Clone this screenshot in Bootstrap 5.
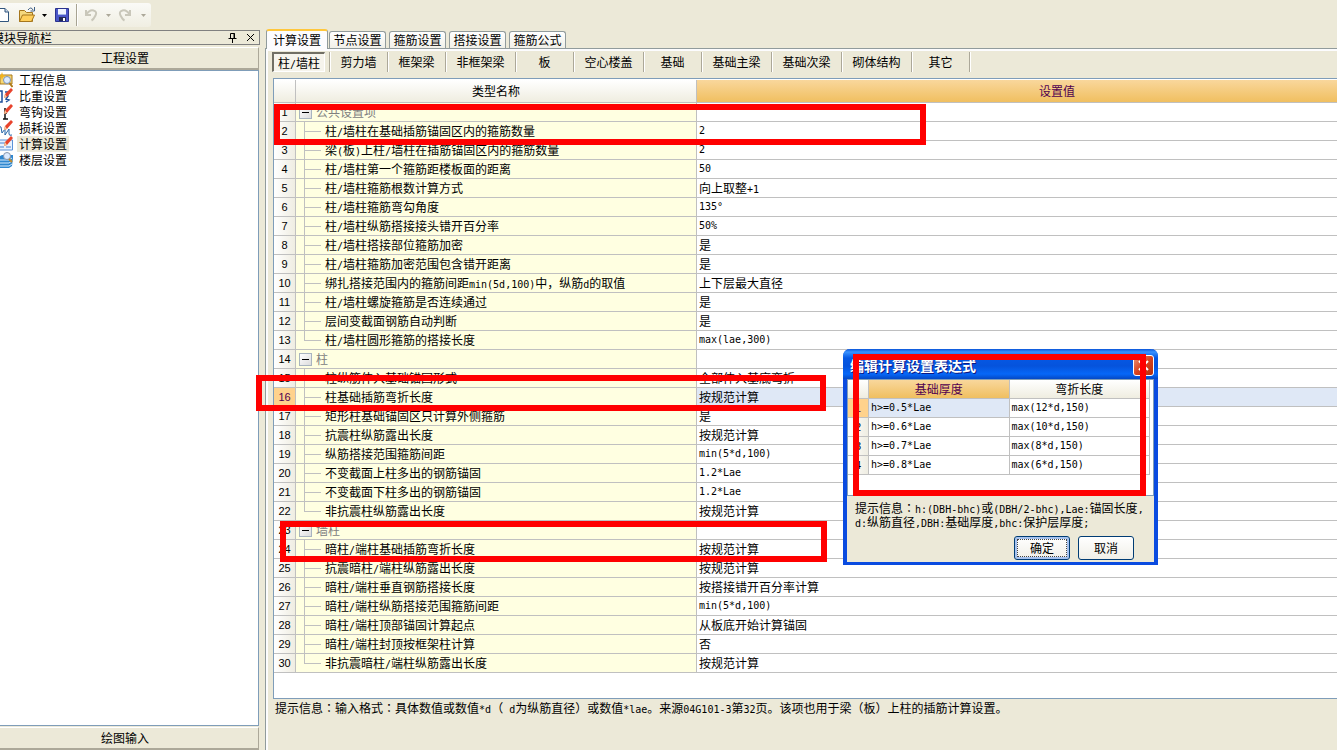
<!DOCTYPE html>
<html lang="zh-CN">
<head>
<meta charset="utf-8">
<meta name="viewport" content="width=device-width, initial-scale=1">
<title>工程设置 - 计算设置</title>
<link href="https://cdn.jsdelivr.net/npm/bootstrap@5.3.0/dist/css/bootstrap.min.css" rel="stylesheet">
<style>
:root{--face:#ece9d8;--line:#c0c0c0;--edge:#7f9db9}
body{font-family:"Noto Sans CJK SC",sans-serif;font-size:12px;line-height:16px;color:#000;background:var(--face)}
button{font:inherit;color:inherit;padding:0;border:0;background:none;white-space:nowrap}
/* half-width Latin text */
.en{font-family:"DejaVu Sans Mono",monospace;font-size:10px}
span.en{line-height:1}
/* colon centred in its square */
.mid{font-family:"Noto Sans CJK TC",sans-serif;line-height:1}
/* toolbar */
.tool-row{height:30px;padding-top:3px}
.tool-strip{height:24px;width:151px;background:linear-gradient(#fafaf7,#f0eee2);border-radius:0 3px 3px 0}
.tool-strip svg{display:block}
.tool-strip button{height:24px}
.tool-sep{width:2px;height:22px;background:#a7a392;border-right:1px solid #fff}
/* navigation panel */
.nav-pane{width:260px;flex:none}
.pane-title{height:15px;border:1px solid #808080;border-left:0;line-height:13px;margin-bottom:2px}
.pane-title b{font-weight:400;margin-left:-8px}
.pane-btn{height:23px;border-top:1px solid #fff;border-right:1px solid #aca899;border-bottom:2px solid #aca899;text-align:center;margin-right:1px;padding-right:8px}
.pane-list{border:1px solid var(--edge);border-left:0;margin:0 1px 1px 0;background:#fff;padding-top:1px}
.pane-list a{display:flex;height:16px;color:#000;text-decoration:none}
.pane-list svg{flex:none;margin-left:-3px;margin-right:4px}
.pane-list span{padding:0 2px}
.pane-list a.current span{background:var(--face)}
/* work area */
.work{margin-left:5px;min-width:0}
.tab-row{height:19px;margin-top:-1px;padding-left:1px;gap:3px;align-items:flex-end}
.tab-row button{width:57px;height:17px;background:linear-gradient(#fff,#f1f0e8);border:1px solid #919b9c;border-bottom:0;border-radius:3px 3px 0 0;line-height:16px}
.tab-row button.active{width:62px;height:20px;margin:0 -2px -1px 0;background:#fcfcfe;border-top:2px solid #ffc73c;position:relative;z-index:1}
.tab-body{border:1px solid #919b9c;border-right:0;border-bottom:0;box-shadow:inset 2px 2px #fcfcfe;padding:3px 0 0 6px}
.sub-row{height:26px}
.sub-row button{height:20px;border-left:1px solid #aca899;box-shadow:inset 1px 0 #fff;line-height:20px}
.sub-row .w3{width:58px}.sub-row .w4{width:70px}
.sub-row .pressed{width:53px;margin-right:4px;border:1px solid #fff;border-top:2px solid #716f64;border-left:2px solid #716f64;background:#f6f4ec;box-shadow:none;line-height:16px}
.sub-row i{width:2px;height:20px;background:#aca899;border-right:1px solid #fff}
.grid-box{border:1px solid var(--edge);border-right:0;background:#fff;padding-top:1px;margin-left:1px}
.sheet{width:100%;table-layout:fixed;border-collapse:separate;border-spacing:0}
.sheet th,.sheet td{height:19px;padding:0 0 0 2px;line-height:18px;border-right:1px solid var(--line);border-bottom:1px solid var(--line);font-weight:400;white-space:nowrap;overflow:hidden}
.sheet th{padding:0;text-align:center;background:linear-gradient(#fff,#efede0)}
.sheet tbody th{background:linear-gradient(90deg,#fff,#efede2);font-family:"Liberation Sans",sans-serif;font-size:11px}
.sheet thead th.hot{color:#500050;background:linear-gradient(#f9d79c,#f0bf60)}
.sheet tbody th.hot{color:#500050;background:#ffd28c}
.sheet td.hot{background:#dfe8f6}
.main-sheet thead th{height:23px;line-height:22px}
.main-sheet thead th.hot{padding-left:80px}
.main-sheet th:last-child,.main-sheet td:last-child{border-right:0}
.main-sheet tbody td:nth-child(2){background:#ffffe1}
.main-sheet tbody td.leaf{padding-left:29px;background:linear-gradient(var(--line),var(--line)) 8px 0/1px 100% no-repeat,linear-gradient(var(--line),var(--line)) 8px 9px/17px 1px no-repeat #ffffe1}
.main-sheet tbody td.tail{background-size:1px 10px,17px 1px}
.main-sheet td.group{padding-left:3px;color:#808080}
.group button{width:13px;height:13px;border:1px solid #a8b4c0;background:linear-gradient(135deg,#fff,#dcdcdc);vertical-align:middle;margin:-2px 4px 0 0;display:inline-flex;align-items:center;justify-content:center}
.group button::before{content:"";width:7px;height:1px;background:#000}
.hint{padding:1px 0 0 3px;height:51px;white-space:nowrap}
/* expression dialog */
.dlg{position:absolute;left:843px;top:349px;width:315px;background:var(--face);border:solid #0a4be0;border-width:0 4px 3px;border-radius:7px 7px 0 0}
.dlg-title{height:30px;margin:0 -4px;padding:2px 4px 0 7px;border-radius:7px 7px 0 0;background:linear-gradient(#0a54d8,#3a93ff 3px,#0558e4 9px,#0553dc 17px,#0667f8 25px,#0448c4);color:#fff;font-size:14px;font-weight:700;text-shadow:1px 1px #0a1883}
.dlg-title button{width:21px;height:21px;border:1px solid #fff;border-radius:3px;background:linear-gradient(135deg,#e9967a,#d8431e 50%,#b5300c)}
.dlg-grid{background:#fff;height:117px;border:1px solid var(--edge);padding:0 3px 0 0}
.dlg-hint{padding:5px 0 0 8px;line-height:13px;height:40px;white-space:nowrap}
.dlg-foot{height:26px;padding-right:20px}
.dlg-foot button{width:56px;height:24px;border:1px solid #003c74;border-radius:3px;background:linear-gradient(#fff,#f0efe8)}
.dlg-foot button.default{box-shadow:inset 0 0 0 2px #a6c2ee;outline:1px dotted #444;outline-offset:-4px}
/* red annotation frames */
.frame{position:absolute;border:6px solid #f00;pointer-events:none}
.f1{left:274px;top:104px;width:652px;height:41px}
.f2{left:256px;top:375px;width:570px;height:36px}
.f3{left:280px;top:521px;width:547px;height:41px}
.f4{left:853px;top:354px;width:293px;height:142px}
</style>
</head>
<body class="position-relative d-flex flex-column min-vh-100 overflow-hidden">
<header class="tool-row">
 <div class="tool-strip d-flex align-items-center">
  <button aria-label="新建" style="width:18px"><svg width="18" height="24" viewBox="0 0 18 24"><path d="M-3 5.500h8l3.500 3.500v9.500H-3z" fill="#fff" stroke="#31557d"/><path d="M5 5.500v3.500h3.500" fill="#c9d8ea" stroke="#31557d"/></svg></button>
  <button aria-label="打开" style="width:20px"><svg width="20" height="24" viewBox="0 0 20 24"><path d="M1.500 18.500v-11h5l2 2h6v9z" fill="#f5d87d" stroke="#a5761d"/><path d="M1.500 18.500l3-6.500h12l-3 6.500z" fill="#ffcf5b" stroke="#a5761d"/><path d="M10 7q3-4 5 0m1.500-3v4h-4" fill="none" stroke="#3f5f86"/></svg></button>
  <button aria-label="打开列表" style="width:14px"><svg width="14" height="24" viewBox="0 0 14 24"><path d="M4 11h5l-2.500 3z"/></svg></button>
  <button aria-label="保存" style="width:24px"><svg width="24" height="24" viewBox="0 0 24 24"><path d="M3.500 5.500h13v13h-13z" fill="#4a56c8" stroke="#2b338e"/><path d="M6 6h8v6H6z" fill="#eef3ff"/><path d="M6 11h8v1H6z" fill="#9fb4e8"/><path d="M7 14h7v4H7z" fill="#222a55"/><path d="M11 15h2v3h-2z" fill="#fff"/></svg></button>
  <span class="tool-sep"></span>
  <button aria-label="撤销" style="width:24px" disabled><svg width="24" height="24" viewBox="0 0 24 24"><path d="M8 7v5h5M8.500 11.500q3-5 7-4t2 5-4 5" fill="none" stroke="#c9c7ba" stroke-width="2"/></svg></button>
  <button aria-label="撤销列表" style="width:14px" disabled><svg width="14" height="24" viewBox="0 0 14 24"><path d="M4 11h5l-2.500 3z" fill="#aca899"/></svg></button>
  <button aria-label="恢复" style="width:22px" disabled><svg width="22" height="24" viewBox="0 0 22 24"><path d="M14 7v5H9M13.500 11.500q-3-5-7-4t-2 5 4 5" fill="none" stroke="#c9c7ba" stroke-width="2"/></svg></button>
  <button aria-label="恢复列表" style="width:13px" disabled><svg width="13" height="24" viewBox="0 0 13 24"><path d="M3 11h5l-2.500 3z" fill="#aca899"/></svg></button>
 </div>
</header>
<div class="d-flex flex-fill">
 <aside class="nav-pane d-flex flex-column">
  <div class="pane-title d-flex align-items-center">
   <b class="me-auto">模块导航栏</b>
   <button class="d-flex me-2" aria-label="固定"><svg width="11" height="11" viewBox="0 0 11 11"><path d="M3.500 6V1.500h4V6M7 1v5M1.500 6.500h8M5.500 7v4" fill="none" stroke="#000"/></svg></button>
   <button class="d-flex me-1" aria-label="关闭"><svg width="9" height="9" viewBox="0 0 9 9"><path d="M1 1l7 7M8 1l-7 7" stroke="#000"/></svg></button>
  </div>
  <button class="pane-btn">工程设置</button>
  <nav class="pane-list flex-fill">
   <a href="#"><svg width="16" height="16" viewBox="0 0 16 16"><path d="M3 3h12v9H3z" fill="#f7d774" stroke="#a8791c"/><path d="M5 0l1 3 3 1-3 1-1 3-1-3-3-1 3-1z" fill="#f2b31c"/><circle cx="10" cy="8" r="3.500" fill="#dcebff" stroke="#7d93b5"/><path d="M12.500 11l3 4" stroke="#b07c1a" stroke-width="2"/></svg><span>工程信息</span></a>
   <a href="#"><svg width="16" height="16" viewBox="0 0 16 16"><path d="M2 3h3v11H2M8 4h3M9 7l2 1-2 3 3 1-3 2" fill="none" stroke="#1f4f9a" stroke-width="1.500"/><path d="M7 10l1-4 6-6 2 2-6 7z" fill="#e8432c"/><path d="M7 10l1-4 2 3z" fill="#f5c99a"/></svg><span>比重设置</span></a>
   <a href="#"><svg width="16" height="16" viewBox="0 0 16 16"><path d="M8 4v11M6 15h5M7 9h3" fill="none" stroke="#111" stroke-width="1.500"/><path d="M7 10l1-4 6-6 2 2-6 7z" fill="#e8432c"/><path d="M7 10l1-4 2 3z" fill="#f5c99a"/></svg><span>弯钩设置</span></a>
   <a href="#"><svg width="16" height="16" viewBox="0 0 16 16"><path d="M1 6l3 1 1 6 3-4v6l4-6v5q0 2 3 1" fill="none" stroke="#2465a8"/><path d="M7 10l1-4 6-6 2 2-6 7z" fill="#e8432c"/><path d="M7 10l1-4 2 3z" fill="#f5c99a"/></svg><span>损耗设置</span></a>
   <a href="#" class="current" aria-current="page"><svg width="16" height="16" viewBox="0 0 16 16"><path d="M0 4h15.500v10H0z" fill="#e8f2ff" stroke="#5b92d8"/><path d="M2 7h6M2 11h5M9 11h5" stroke="#4b84cf"/><path d="M7 10l1-4 6-6 2 2-6 7z" fill="#e8432c"/><path d="M7 10l1-4 2 3z" fill="#f5c99a"/></svg><span>计算设置</span></a>
   <a href="#"><svg width="16" height="16" viewBox="0 0 16 16"><path d="M1 5l4-2h11v3l-1 8-3 2H1z" fill="#2f87cf"/><path d="M2 8h10l3-2M2 11h10l3-2M2 14h10l3-2" stroke="#d6ecff" fill="none"/><circle cx="10" cy="4" r="3.500" fill="#dcebff" stroke="#8795ab"/><path d="M12 7l3 3" stroke="#c08a2a" stroke-width="2"/></svg><span>楼层设置</span></a>
  </nav>
  <button class="pane-btn">绘图输入</button>
 </aside>
 <main class="work flex-fill d-flex flex-column">
  <div class="tab-row d-flex" role="tablist">
   <button class="active" role="tab">计算设置</button><button role="tab">节点设置</button><button role="tab">箍筋设置</button><button role="tab">搭接设置</button><button role="tab">箍筋公式</button>
  </div>
  <div class="tab-body flex-fill d-flex flex-column">
   <div class="sub-row d-flex">
    <button class="pressed">柱<span class="en">/</span>墙柱</button><button class="w3">剪力墙</button><button class="w3">框架梁</button><button class="w4">非框架梁</button><button class="w3">板</button><button class="w4">空心楼盖</button><button class="w3">基础</button><button class="w4">基础主梁</button><button class="w4">基础次梁</button><button class="w4">砌体结构</button><button class="w3">其它</button><i></i>
   </div>
   <div class="grid-box flex-fill">
    <table class="sheet main-sheet">
     <colgroup><col style="width:22px"><col style="width:401px"><col></colgroup>
     <thead><tr><th></th><th>类型名称</th><th class="hot">设置值</th></tr></thead>
     <tbody>
      <tr><th>1</th><td class="group"><button aria-label="折叠"></button>公共设置项</td><td></td></tr>
      <tr><th>2</th><td class="leaf">柱<span class="en">/</span>墙柱在基础插筋锚固区内的箍筋数量</td><td class="en">2</td></tr>
      <tr><th>3</th><td class="leaf">梁<span class="en">(</span>板<span class="en">)</span>上柱<span class="en">/</span>墙柱在插筋锚固区内的箍筋数量</td><td class="en">2</td></tr>
      <tr><th>4</th><td class="leaf">柱<span class="en">/</span>墙柱第一个箍筋距楼板面的距离</td><td class="en">50</td></tr>
      <tr><th>5</th><td class="leaf">柱<span class="en">/</span>墙柱箍筋根数计算方式</td><td>向上取整<span class="en">+1</span></td></tr>
      <tr><th>6</th><td class="leaf">柱<span class="en">/</span>墙柱箍筋弯勾角度</td><td class="en">135°</td></tr>
      <tr><th>7</th><td class="leaf">柱<span class="en">/</span>墙柱纵筋搭接接头错开百分率</td><td class="en">50%</td></tr>
      <tr><th>8</th><td class="leaf">柱<span class="en">/</span>墙柱搭接部位箍筋加密</td><td>是</td></tr>
      <tr><th>9</th><td class="leaf">柱<span class="en">/</span>墙柱箍筋加密范围包含错开距离</td><td>是</td></tr>
      <tr><th>10</th><td class="leaf">绑扎搭接范围内的箍筋间距<span class="en">min(5d,100)</span>中，纵筋<span class="en">d</span>的取值</td><td>上下层最大直径</td></tr>
      <tr><th>11</th><td class="leaf">柱<span class="en">/</span>墙柱螺旋箍筋是否连续通过</td><td>是</td></tr>
      <tr><th>12</th><td class="leaf">层间变截面钢筋自动判断</td><td>是</td></tr>
      <tr><th>13</th><td class="leaf tail">柱<span class="en">/</span>墙柱圆形箍筋的搭接长度</td><td class="en">max(lae,300)</td></tr>
      <tr><th>14</th><td class="group"><button aria-label="折叠"></button>柱</td><td></td></tr>
      <tr><th>15</th><td class="leaf">柱纵筋伸入基础锚固形式</td><td>全部伸入基底弯折</td></tr>
      <tr><th class="hot">16</th><td class="leaf">柱基础插筋弯折长度</td><td class="hot">按规范计算</td></tr>
      <tr><th>17</th><td class="leaf">矩形柱基础锚固区只计算外侧箍筋</td><td>是</td></tr>
      <tr><th>18</th><td class="leaf">抗震柱纵筋露出长度</td><td>按规范计算</td></tr>
      <tr><th>19</th><td class="leaf">纵筋搭接范围箍筋间距</td><td class="en">min(5*d,100)</td></tr>
      <tr><th>20</th><td class="leaf">不变截面上柱多出的钢筋锚固</td><td class="en">1.2*Lae</td></tr>
      <tr><th>21</th><td class="leaf">不变截面下柱多出的钢筋锚固</td><td class="en">1.2*Lae</td></tr>
      <tr><th>22</th><td class="leaf tail">非抗震柱纵筋露出长度</td><td>按规范计算</td></tr>
      <tr><th>23</th><td class="group"><button aria-label="折叠"></button>墙柱</td><td></td></tr>
      <tr><th>24</th><td class="leaf">暗柱<span class="en">/</span>端柱基础插筋弯折长度</td><td>按规范计算</td></tr>
      <tr><th>25</th><td class="leaf">抗震暗柱<span class="en">/</span>端柱纵筋露出长度</td><td>按规范计算</td></tr>
      <tr><th>26</th><td class="leaf">暗柱<span class="en">/</span>端柱垂直钢筋搭接长度</td><td>按搭接错开百分率计算</td></tr>
      <tr><th>27</th><td class="leaf">暗柱<span class="en">/</span>端柱纵筋搭接范围箍筋间距</td><td class="en">min(5*d,100)</td></tr>
      <tr><th>28</th><td class="leaf">暗柱<span class="en">/</span>端柱顶部锚固计算起点</td><td>从板底开始计算锚固</td></tr>
      <tr><th>29</th><td class="leaf">暗柱<span class="en">/</span>端柱封顶按框架柱计算</td><td>否</td></tr>
      <tr><th>30</th><td class="leaf tail">非抗震暗柱<span class="en">/</span>端柱纵筋露出长度</td><td>按规范计算</td></tr>
     </tbody>
    </table>
   </div>
   <div class="hint">提示信息<span class="mid" lang="zh-TW">：</span>输入格式<span class="mid" lang="zh-TW">：</span>具体数值或数值<span class="en">*d</span>（<span class="en"> d</span>为纵筋直径）或数值<span class="en">*lae</span>。来源<span class="en">04G101-3</span>第<span class="en">32</span>页。该项也用于梁（板）上柱的插筋计算设置。</div>
  </div>
 </main>
</div>
<section class="dlg" role="dialog" aria-labelledby="dlgTitle">
 <div class="dlg-title d-flex align-items-center"><span id="dlgTitle" class="me-auto">编辑计算设置表达式</span><button aria-label="关闭"><svg class="d-block m-auto" width="13" height="13" viewBox="0 0 13 13"><path d="M2 2l9 9M11 2l-9 9" stroke="#fff" stroke-width="2"/></svg></button></div>
 <div class="dlg-grid">
  <table class="sheet">
   <colgroup><col style="width:21px"><col><col></colgroup>
   <thead><tr><th></th><th class="hot">基础厚度</th><th>弯折长度</th></tr></thead>
   <tbody class="en">
    <tr><th class="hot">1</th><td class="hot">h&gt;=0.5*Lae</td><td>max(12*d,150)</td></tr>
    <tr><th>2</th><td>h&gt;=0.6*Lae</td><td>max(10*d,150)</td></tr>
    <tr><th>3</th><td>h&gt;=0.7*Lae</td><td>max(8*d,150)</td></tr>
    <tr><th>4</th><td>h&gt;=0.8*Lae</td><td>max(6*d,150)</td></tr>
   </tbody>
  </table>
 </div>
 <div class="dlg-hint">提示信息<span class="mid" lang="zh-TW">：</span><span class="en">h:(DBH-bhc)</span>或<span class="en">(DBH/2-bhc),Lae:</span>锚固长度<span class="en">,</span><br><span class="en">d:</span>纵筋直径<span class="en">,DBH:</span>基础厚度<span class="en">,bhc:</span>保护层厚度<span class="en">;</span></div>
 <div class="dlg-foot d-flex justify-content-end gap-2"><button class="default">确定</button><button>取消</button></div>
</section>
<div class="frame f1"></div><div class="frame f2"></div><div class="frame f3"></div><div class="frame f4"></div>
<script src="https://cdn.jsdelivr.net/npm/bootstrap@5.3.0/dist/js/bootstrap.bundle.min.js"></script>
</body>
</html>
